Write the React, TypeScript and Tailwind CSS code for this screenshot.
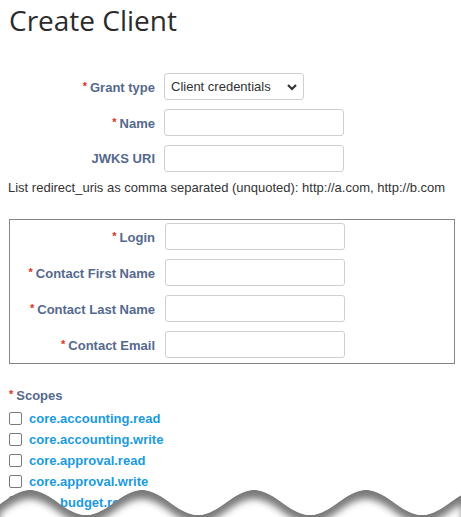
import React from "react";

const label = "text-right font-bold text-[13px] text-[#54698d] leading-[16px]";
const input = "h-[27px] w-[180px] rounded-[3px] border border-[#cfcfcf] bg-white";

function Req() {
  return <span className="text-[#e0301e] text-[11px] mr-[3px] align-[2px]">*</span>;
}

function Row({ text, req, width }: { text: string; req?: boolean; width: number }) {
  return (
    <div className="flex items-center">
      <div className={label} style={{ width }}>
        {req && <Req />}
        {text}
      </div>
      <input className={input + (width === 145 ? " ml-[10px]" : " ml-[9px]")} />
    </div>
  );
}

function Wave() {
  const pts: [number, number][] = [];
  for (let x = 0; x <= 462; x += 2) {
    const y = 25.5 - 12.5 * Math.cos((2 * Math.PI * (x - 30)) / 112);
    pts.push([x, y]);
  }
  const top = "M" + pts.map(([x, y]) => `${x},${y.toFixed(2)}`).join(" L");
  const shifted = "M" + pts.map(([x, y]) => `${x},${(y + 9).toFixed(2)}`).join(" L");
  return (
    <svg className="absolute left-0 bottom-0" width="461" height="40" viewBox="0 0 461 40">
      <defs>
        <filter id="bl" x="-10%" y="-50%" width="120%" height="200%">
          <feGaussianBlur stdDeviation="3.5" />
        </filter>
        <clipPath id="cp">
          <path d={top + " L461,60 L0,60 Z"} />
        </clipPath>
      </defs>
      <g clipPath="url(#cp)">
        <path d={top + " L461,60 L0,60 Z"} fill="#7a7a7a" />
        <path d={shifted + " L461,70 L0,70 Z"} fill="#fff" filter="url(#bl)" />
      </g>
    </svg>
  );
}

const scopes = [
  "core.accounting.read",
  "core.accounting.write",
  "core.approval.read",
  "core.approval.write",
  "core.budget.read",
];

export default function App() {
  return (
    <div className="relative w-[461px] h-[517px] overflow-hidden bg-white font-['Liberation_Sans',Arial,sans-serif]">
      <h1 className="pl-[9px] pt-[1px] h-[40px] font-['Open_Sans',sans-serif] text-[28px] leading-[38px] text-[#2b2b2b]">
        Create Client
      </h1>

      <div className="mt-[33px] flex flex-col gap-[9px]">
        <div className="flex items-center">
          <div className={label + " w-[155px]"}>
            <Req />
            Grant type
          </div>
          <div className="ml-[9px] h-[27px] w-[140px] rounded-[3px] border border-[#cfcfcf] bg-white flex items-center justify-between pl-[6px] pr-[5px]">
            <span className="text-[13px] text-[#333]">Client credentials</span>
            <svg width="12" height="8" viewBox="0 0 12 8">
              <path d="M2 2 L6 6 L10 2" fill="none" stroke="#333" strokeWidth="2.2" />
            </svg>
          </div>
        </div>
        <Row text="Name" req width={155} />
        <Row text="JWKS URI" width={155} />
      </div>

      <p className="mt-[8px] pl-[8px] text-[13px] leading-[16px] text-[#333]">
        List redirect_uris as comma separated (unquoted): http://a.com, http://b.com
      </p>

      <div className="mt-[23px] ml-[9px] w-[446px] border border-[#858585] pt-[3px] pb-[5px] flex flex-col gap-[9px]">
        <Row text="Login" req width={145} />
        <Row text="Contact First Name" req width={145} />
        <Row text="Contact Last Name" req width={145} />
        <Row text="Contact Email" req width={145} />
      </div>

      <div className="mt-[22px] pl-[9px]">
        <div className="font-bold text-[13px] leading-[16px] text-[#54698d]">
          <Req />
          Scopes
        </div>
        <ul className="mt-[4px]">
          {scopes.map((s) => (
            <li key={s} className="flex items-center h-[21px]">
              <span className="w-[13px] h-[13px] rounded-[2px] border border-[#7a7a7a] bg-white" />
              <a className="ml-[7px] font-bold text-[13px] text-[#1a9ade]">{s}</a>
            </li>
          ))}
        </ul>
      </div>

      <Wave />
    </div>
  );
}
